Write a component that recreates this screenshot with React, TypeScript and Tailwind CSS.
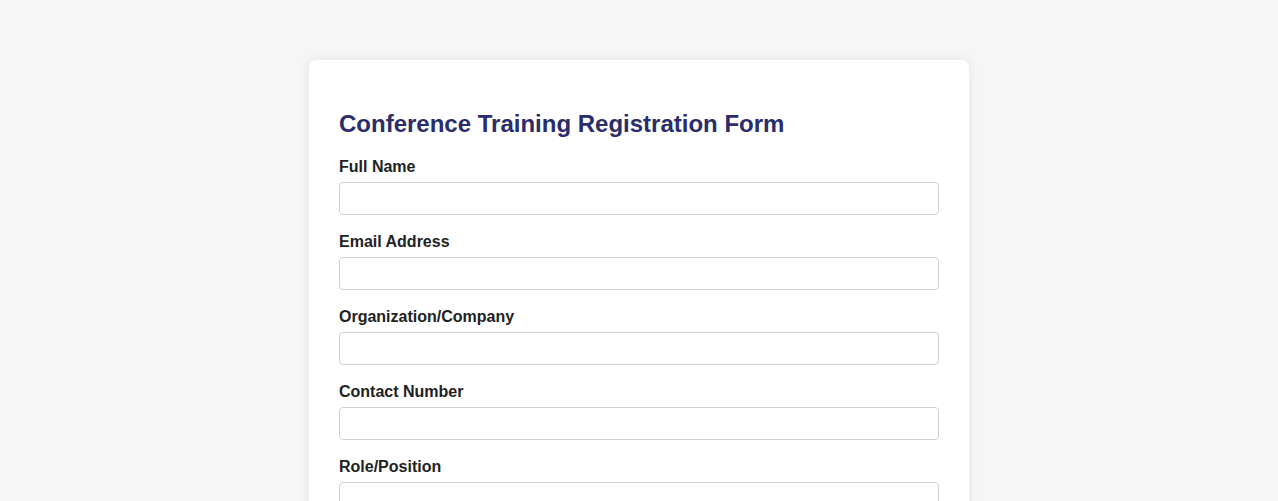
import React from "react";

const fields = [
  "Full Name",
  "Email Address",
  "Organization/Company",
  "Contact Number",
  "Role/Position",
];

export default function App() {
  return (
    <div
      className="min-h-screen bg-[#f6f6f6] pt-[60px] pb-10"
      style={{ fontFamily: '"Liberation Sans", Arial, sans-serif' }}
    >
      <div className="mx-auto w-[660px] rounded-[8px] bg-white p-[30px] shadow-[0_0_12px_rgba(0,0,0,0.08)]">
        <h2 className="mt-[20px] mb-[20px] text-[24px] font-bold leading-[28px] text-[#2b2d6b]">
          Conference Training Registration Form
        </h2>
        {fields.map((f) => (
          <div key={f} className="mb-[18px]">
            <label className="mb-[6px] block text-[16px] font-bold leading-[18px] text-[#222]">
              {f}
            </label>
            <input
              type="text"
              className="block h-[33px] w-full rounded-[4px] border border-[#cfd1da] bg-white px-[8px] text-[13px] outline-none"
            />
          </div>
        ))}
      </div>
    </div>
  );
}
